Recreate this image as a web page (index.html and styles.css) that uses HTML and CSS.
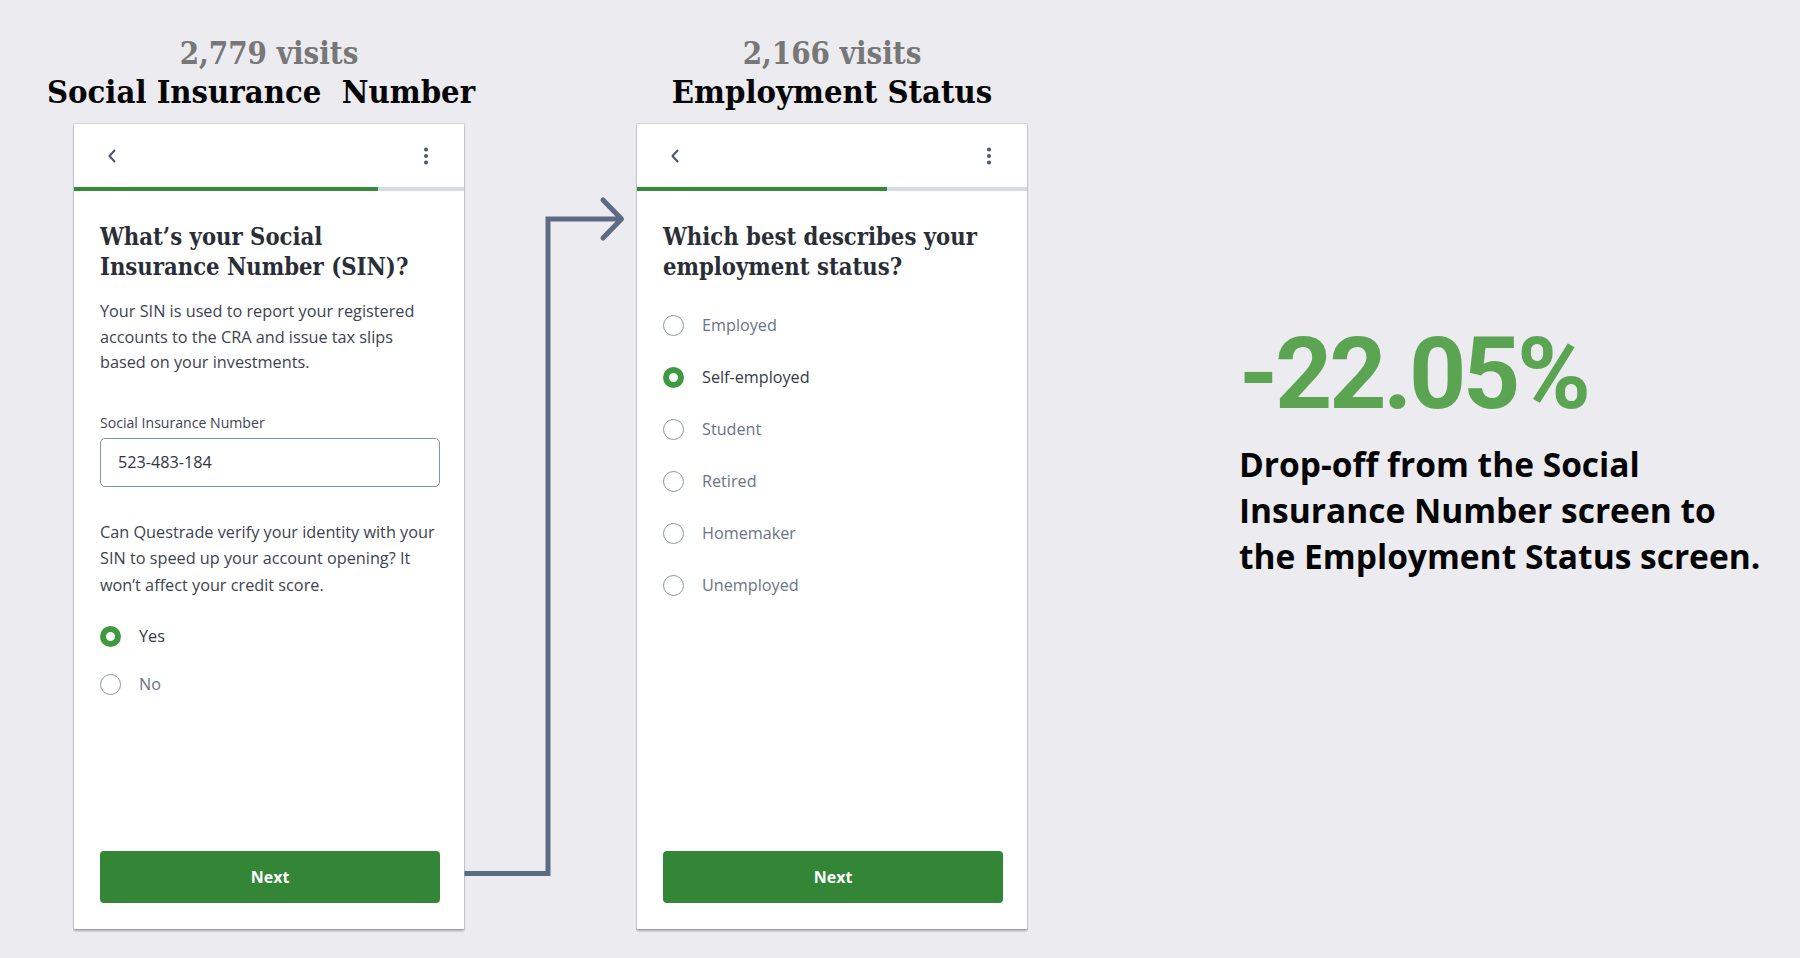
FILE: index.html
```html
<!DOCTYPE html>
<html lang="en">
<head>
<meta charset="utf-8">
<title>Drop-off: SIN to Employment Status</title>
<link rel="stylesheet" href="styles.css">
</head>
<body>
<main class="board">
  <svg class="connector" width="1800" height="958" viewBox="0 0 1800 958" aria-hidden="true">
    <path d="M464 873.5 H548 V219 H620" fill="none" stroke="#5d6a84" stroke-width="5" stroke-linejoin="miter"/>
    <path d="M603 200 L621.5 219 L603 238" fill="none" stroke="#5d6a84" stroke-width="5" stroke-linecap="round" stroke-linejoin="round"/>
  </svg>

  <section class="step">
    <header class="step-head">
      <div class="visits">2,779 visits</div>
      <div class="step-title step-title-offset">Social Insurance&nbsp; Number</div>
    </header>
    <div class="phone">
      <div class="topbar">
        <svg class="icon-back" width="12" height="16" viewBox="0 0 12 16"><path d="M8.5 2.5 L3.5 8 L8.5 13.5" fill="none" stroke="#4b5771" stroke-width="2" stroke-linecap="round" stroke-linejoin="round"/></svg>
        <svg class="icon-more" width="6" height="18" viewBox="0 0 6 18"><circle cx="3" cy="2.5" r="2" fill="#4b5771"/><circle cx="3" cy="9" r="2" fill="#4b5771"/><circle cx="3" cy="15.5" r="2" fill="#4b5771"/></svg>
      </div>
      <div class="progress"><div class="progress-fill" style="width:78%"></div></div>
      <div class="screen">
        <h2 class="q-title">What’s your Social<br>Insurance Number (SIN)?</h2>
        <p class="copy">Your SIN is used to report your registered<br>accounts to the CRA and issue tax slips<br>based on your investments.</p>
        <div class="field-label">Social Insurance Number</div>
        <div class="field">523-483-184</div>
        <p class="copy question">Can Questrade verify your identity with your<br>SIN to speed up your account opening? It<br>won’t affect your credit score.</p>
        <div class="options options-tight">
          <div class="option on"><span class="radio on"></span><span>Yes</span></div>
          <div class="option"><span class="radio"></span><span>No</span></div>
        </div>
        <button class="next">Next</button>
      </div>
    </div>
  </section>

  <section class="step step-second">
    <header class="step-head">
      <div class="visits">2,166 visits</div>
      <div class="step-title">Employment Status</div>
    </header>
    <div class="phone">
      <div class="topbar">
        <svg class="icon-back" width="12" height="16" viewBox="0 0 12 16"><path d="M8.5 2.5 L3.5 8 L8.5 13.5" fill="none" stroke="#4b5771" stroke-width="2" stroke-linecap="round" stroke-linejoin="round"/></svg>
        <svg class="icon-more" width="6" height="18" viewBox="0 0 6 18"><circle cx="3" cy="2.5" r="2" fill="#4b5771"/><circle cx="3" cy="9" r="2" fill="#4b5771"/><circle cx="3" cy="15.5" r="2" fill="#4b5771"/></svg>
      </div>
      <div class="progress"><div class="progress-fill" style="width:64%"></div></div>
      <div class="screen">
        <h2 class="q-title">Which best describes your<br>employment status?</h2>
        <div class="options options-wide">
          <div class="option"><span class="radio"></span><span>Employed</span></div>
          <div class="option on"><span class="radio on"></span><span>Self-employed</span></div>
          <div class="option"><span class="radio"></span><span>Student</span></div>
          <div class="option"><span class="radio"></span><span>Retired</span></div>
          <div class="option"><span class="radio"></span><span>Homemaker</span></div>
          <div class="option"><span class="radio"></span><span>Unemployed</span></div>
        </div>
        <button class="next">Next</button>
      </div>
    </div>
  </section>

  <aside class="stat">
    <div class="stat-value">-22.05%</div>
    <p class="stat-text">Drop-off from the Social<br>Insurance Number screen to<br>the Employment Status screen.</p>
  </aside>
</main>
</body>
</html>
```

FILE: styles.css
```css
html, body {
  margin: 0;
  padding: 0;
}

body {
  background: #ecebf0;
  font-family: "Open Sans", "Liberation Sans", sans-serif;
  color: #3c4350;
}

.board {
  position: relative;
  display: flex;
  align-items: flex-start;
  width: 1800px;
  height: 958px;
  padding-left: 74px;
  box-sizing: border-box;
  overflow: hidden;
}

.connector {
  position: absolute;
  left: 0;
  top: 0;
  pointer-events: none;
}

.step {
  position: relative;
  width: 390px;
  display: flex;
  flex-direction: column;
  align-items: center;
}

.step-second {
  margin-left: 173px;
}

.step-head {
  height: 124px;
  box-sizing: border-box;
  padding-top: 33px;
  display: flex;
  flex-direction: column;
  align-items: center;
  font-family: "DejaVu Serif", "Liberation Serif", serif;
  font-stretch: condensed;
  font-weight: 700;
  line-height: 40px;
  white-space: nowrap;
}

.visits {
  font-size: 31px;
  color: #777777;
}

.step-title {
  font-size: 32.5px;
  color: #050505;
  margin-top: -1px;
}

.step-title-offset {
  margin-right: 16px;
}

.phone {
  width: 390px;
  height: 805px;
  background: #ffffff;
  box-shadow: 0 2px 2px rgba(0, 0, 0, 0.28), 0 0 0 1px rgba(200, 202, 210, 0.6);
  display: flex;
  flex-direction: column;
}

.topbar {
  height: 63px;
  display: flex;
  align-items: center;
  justify-content: space-between;
  padding: 0 35px 0 32px;
}

.progress {
  height: 4px;
  background: #d4dbe3;
}

.progress-fill {
  height: 100%;
  background: #37893a;
}

.screen {
  flex: 1;
  display: flex;
  flex-direction: column;
  padding: 31px 24px 26px 26px;
}

.q-title {
  margin: 0;
  font-family: "DejaVu Serif", "Liberation Serif", serif;
  font-stretch: condensed;
  font-weight: 700;
  font-size: 23.6px;
  line-height: 30px;
  color: #2a2f37;
  white-space: nowrap;
}

.copy {
  margin: 17px 0 0;
  font-size: 16.25px;
  line-height: 25.6px;
  color: #3c4350;
  white-space: nowrap;
}

.field-label {
  margin-top: 37px;
  font-size: 14.1px;
  line-height: 20px;
  color: #3c4350;
}

.field {
  margin-top: 5px;
  height: 49px;
  box-sizing: border-box;
  border: 1.5px solid #8893a1;
  border-radius: 5px;
  padding-left: 17px;
  display: flex;
  align-items: center;
  font-size: 16.2px;
  color: #2f3540;
}

.question {
  margin-top: 32px;
  line-height: 26.5px;
}

.options {
  display: flex;
  flex-direction: column;
}

.options-tight {
  margin-top: 14px;
}

.options-tight .option {
  height: 48px;
}

.options-wide {
  margin-top: 17px;
}

.options-wide .option {
  height: 52px;
}

.option {
  display: flex;
  align-items: center;
  gap: 18px;
  font-size: 16.2px;
  color: #6a7586;
}

.option.on {
  color: #333a45;
}

.radio {
  width: 21px;
  height: 21px;
  box-sizing: border-box;
  border-radius: 50%;
  border: 1.5px solid #8a94a2;
  flex: none;
}

.radio.on {
  border: 6px solid #3d9a40;
}

.next {
  margin-top: auto;
  height: 52px;
  width: 100%;
  border: 0;
  border-radius: 4px;
  background: #348637;
  color: #ffffff;
  font-family: "Open Sans", "Liberation Sans", sans-serif;
  font-weight: 700;
  font-size: 16px;
}

.stat {
  margin-left: 212px;
  padding-top: 324px;
}

.stat-value {
  font-family: Roboto, "Liberation Sans", sans-serif;
  font-weight: 700;
  font-size: 100px;
  line-height: 1;
  letter-spacing: -3.3px;
  color: #5ba552;
  white-space: nowrap;
}

.stat-text {
  margin: 17px 0 0;
  font-family: "Open Sans", "Liberation Sans", sans-serif;
  font-weight: 700;
  font-size: 33.5px;
  line-height: 46px;
  color: #050505;
  white-space: nowrap;
}
```
